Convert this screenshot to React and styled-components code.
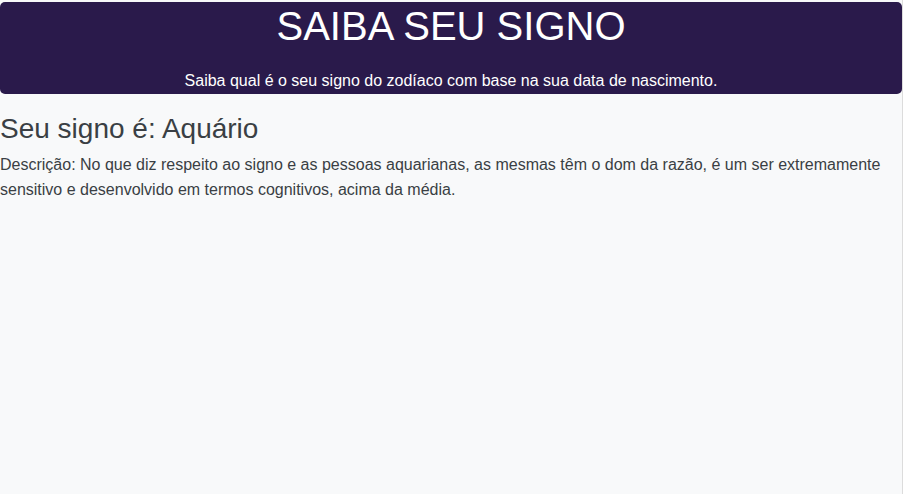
import React from "react";
import styled, { createGlobalStyle } from "styled-components";

const Global = createGlobalStyle`
  html, body {
    margin: 0;
    padding: 0;
    background: #ffffff;
  }
  body {
    font-family: "Liberation Sans", Arial, sans-serif;
  }
`;

const Page = styled.div`
  width: 903px;
  min-height: 494px;
  box-sizing: border-box;
  padding-top: 2px;
  background: #f8f9fa;
  border-right: 1px solid #dcdcdc;
  color: #3a3f44;
`;

const Header = styled.header`
  background: #2a1a4b;
  color: #ffffff;
  border-radius: 5px;
  text-align: center;
  padding: 0 0 1px;
`;

const Title = styled.h1`
  margin: 0;
  font-size: 40px;
  font-weight: 400;
  line-height: 1.2;
`;

const Subtitle = styled.p`
  margin: 19px 0 0;
  font-size: 16px;
  line-height: 24px;
`;

const Result = styled.section`
  padding-top: 18px;
`;

const Heading = styled.h2`
  margin: 0;
  font-size: 28px;
  font-weight: 400;
  line-height: 1.2;
`;

const Description = styled.p`
  margin: 6px 0 0;
  font-size: 16px;
  line-height: 25.6px;
`;

export default function App() {
  return (
    <>
      <Global />
      <Page>
        <Header>
          <Title>SAIBA SEU SIGNO</Title>
          <Subtitle>
            Saiba qual é o seu signo do zodíaco com base na sua data de nascimento.
          </Subtitle>
        </Header>
        <Result>
          <Heading>Seu signo é: Aquário</Heading>
          <Description>
            Descrição: No que diz respeito ao signo e as pessoas aquarianas, as mesmas têm o dom
            da razão, é um ser extremamente sensitivo e desenvolvido em termos cognitivos, acima
            da média.
          </Description>
        </Result>
      </Page>
    </>
  );
}
